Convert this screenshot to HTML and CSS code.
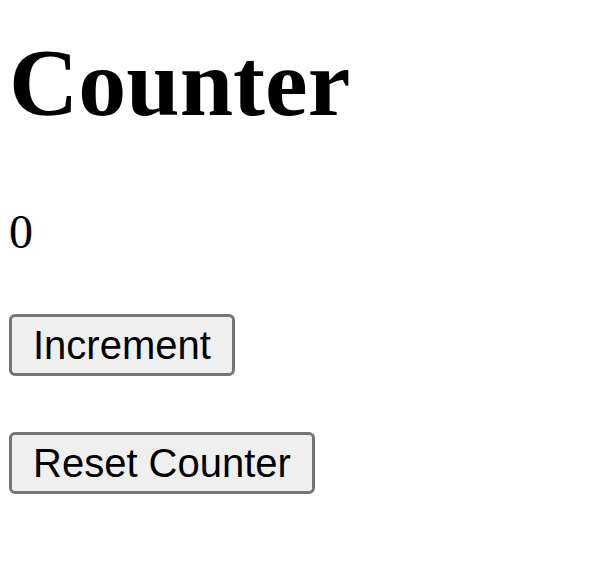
FILE: index.html
```html
<!DOCTYPE html>
<html lang="en">
<head>
<meta charset="utf-8">
<title>Counter</title>
<link rel="stylesheet" href="styles.css">
</head>
<body>
<main class="page">
  <h1 class="title">Counter</h1>
  <p class="count">0</p>
  <button class="btn" type="button">Increment</button>
  <button class="btn" type="button">Reset Counter</button>
</main>
</body>
</html>
```
FILE: styles.css
```css
html, body {
  margin: 0;
  padding: 0;
  background: #ffffff;
}
.page {
  padding: 30px 9px 0;
  font-family: "Liberation Serif", "Times New Roman", serif;
  color: #000;
}
.title {
  margin: 0 0 69px;
  font-size: 96px;
  line-height: 106px;
  font-weight: bold;
}
.count {
  margin: 0 0 56px;
  font-size: 48px;
  line-height: 53px;
}
.btn {
  display: block;
  margin: 0 0 56px;
  padding: 5px 21px;
  font-family: "Liberation Sans", Arial, sans-serif;
  font-size: 40px;
  line-height: 46px;
  color: #000;
  background: #efefef;
  border: 3px solid #767676;
  border-radius: 6px;
}
```
